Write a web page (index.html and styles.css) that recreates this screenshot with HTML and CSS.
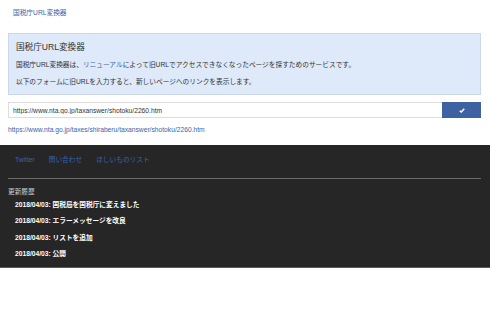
FILE: index.html
```html
<!DOCTYPE html>
<html lang="ja">
<head>
    <meta charset="UTF-8">
    <meta name="viewport" content="width=device-width, initial-scale=1.0">
    <title>国税庁URL変換器</title>
    <link rel="stylesheet" href="styles.css">
</head>
<body>
    <header class="top">
        <a href="#" class="brand">国税庁URL変換器</a>
    </header>

    <div class="container">
        <div class="jumbo">
            <h1>国税庁URL変換器</h1>
            <p>国税庁URL変換器は、<a href="#">リニューアル</a>によって旧URLでアクセスできなくなったページを探すためのサービスです。</p>
            <p>以下のフォームに旧URLを入力すると、新しいページへのリンクを表示します。</p>
        </div>

        <form class="convert" onsubmit="return false;">
            <input type="text" id="oldUrl" value="https://www.nta.go.jp/taxanswer/shotoku/2260.htm">
            <button type="submit">
                <svg width="6" height="5" viewBox="0 0 7 6"><path d="M0.8 3.2 L2.6 4.9 L6.2 1" fill="none" stroke="#fff" stroke-width="1.7"/></svg>
            </button>
        </form>
        <div class="result">
            <a href="#">https://www.nta.go.jp/taxes/shiraberu/taxanswer/shotoku/2260.htm</a>
        </div>
    </div>

    <footer>
        <div class="container">
            <ul class="links">
                <li><a href="#">Twitter</a></li>
                <li><a href="#">問い合わせ</a></li>
                <li><a href="#">ほしいものリスト</a></li>
            </ul>
            <hr>
            <h4>更新履歴</h4>
            <ul class="history">
                <li>2018/04/03: 国税局を国税庁に変えました</li>
                <li>2018/04/03: エラーメッセージを改良</li>
                <li>2018/04/03: リストを追加</li>
                <li>2018/04/03: 公開</li>
            </ul>
        </div>
    </footer>
</body>
</html>
```

FILE: styles.css
```css
body {
    margin: 0;
    font-family: "Liberation Sans", "Noto Sans CJK JP", sans-serif;
    font-size: 6.7px;
    color: #333;
    background: #fff;
}
a {
    color: #3a63a8;
    text-decoration: none;
}
.container {
    padding: 0 9px 0 8px;
}
.top {
    padding: 8px 9px 0 8px;
    height: 25px;
}
.top .brand {
    display: block;
    padding-left: 5px;
    line-height: 9px;
}
.jumbo {
    background: #dee9f9;
    border: 1px solid #cad8ea;
    padding: 7px 7px 3px;
    height: 50px;
}
.jumbo h1 {
    margin: 0 0 7px;
    font-size: 8.6px;
    font-weight: normal;
    line-height: 12px;
    color: #333;
}
.jumbo p {
    margin: 0 0 7px;
    line-height: 10px;
}
.convert {
    display: flex;
    margin: 7px 0 0;
    height: 16px;
}
.convert input {
    flex: 1;
    min-width: 0;
    box-sizing: border-box;
    height: 16px;
    margin: 0;
    padding: 0 4px;
    border: 1px solid #ddd;
    border-right: none;
    font-family: inherit;
    font-size: 6.7px;
    color: #333;
}
.convert button {
    width: 39px;
    height: 16px;
    margin: 0;
    padding: 0;
    border: none;
    background: #3e62a1;
    display: flex;
    align-items: center;
    justify-content: center;
    cursor: pointer;
}
.result {
    padding: 7px 0;
    line-height: 10px;
    height: 9px;
}
footer {
    background: #262626;
    color: #ddd;
    margin-top: 4px;
    padding: 10px 0 2px;
    border-bottom: 1px solid #5a5a5a;
}
.links {
    list-style: none;
    margin: 0;
    padding: 0 0 0 7px;
    display: flex;
    gap: 14px;
    line-height: 10px;
}
footer hr {
    border: none;
    border-top: 1px solid #6b6b6b;
    margin: 13px 0 8px;
}
footer h4 {
    margin: 0 0 3px;
    font-size: 6.7px;
    font-weight: normal;
    line-height: 10px;
    color: #ccc;
}
.history {
    list-style: none;
    margin: 0;
    padding: 0 0 0 7px;
    font-weight: bold;
    color: #fff;
}
.history li {
    line-height: 10px;
    margin-bottom: 6.3px;
}
```
